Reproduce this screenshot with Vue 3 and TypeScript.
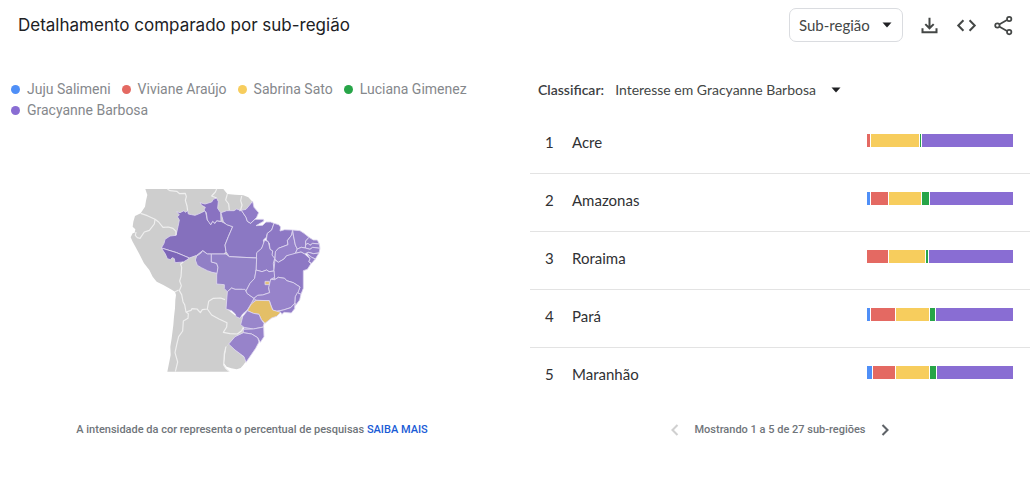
<script setup lang="ts">
import { ref } from 'vue'

interface Term { name: string; color: string }
interface Region { name: string; values: number[] }
interface Shape { id: string; d: string; fill: string }

const terms: Term[] = [
  { name: 'Juju Salimeni', color: '#4f8ff7' },
  { name: 'Viviane Araújo', color: '#e46962' },
  { name: 'Sabrina Sato', color: '#f7cd5d' },
  { name: 'Luciana Gimenez', color: '#27a548' },
  { name: 'Gracyanne Barbosa', color: '#896dd3' },
]

const regions: Region[] = [
  { name: 'Acre', values: [0, 3, 48, 1, 91] },
  { name: 'Amazonas', values: [3, 17, 32, 7, 83] },
  { name: 'Roraima', values: [0, 21, 36, 2, 84] },
  { name: 'Pará', values: [3, 24, 33, 5, 77] },
  { name: 'Maranhão', values: [5, 22, 33, 6, 76] },
]

const level = ref('Sub-região')
const sort = ref('Gracyanne Barbosa')

const segments = (r: Region) =>
  r.values.map((value, i) => ({ value, color: terms[i].color })).filter((s) => s.value > 0)

const land =
  'M76 27H310L322 42L345 44L370 46L385 52L396 64L380 95L340 200L340 330L322 335L318 385L352 412L368 410L370 458L345 470L328 490L318 500L313 520L311 555L318 566L328 575H142L152 525L151 500L155 475L160 435L162 410L165 385L166 360L168 345L165 335L150 326L130 315L110 305L98 290L88 270L72 250L58 222L45 198L38 185L32 172L38 160L44 158L46 148L38 140L40 125L45 108L62 100L75 80L78 62L82 45Z'
const uruguay =
  'M318 500L328 490L345 510L365 526L377 536L377 545L370 555L362 564L350 568L334 565L320 560L312 550L315 525Z'
const interior =
  'M300 240H540V320L520 360L440 390L425 425L428 465L405 464L372 456L372 445L366 434L370 408L385 388L340 330Z'

const states: Shape[] = [
  { id: 'AM', fill: '#8570bd', d: 'M170 95L180 98L192 92L196 97L203 92L205 102L215 104L225 106L240 100L256 92L262 120L268 126L272 134L278 124L285 130L290 122L305 125L322 134L338 140L325 170L315 195L318 215L312 222H262L248 212L230 226L208 234L170 218L124 204L132 190L135 178L150 168L168 166L174 140L178 120L172 110L178 105Z' },
  { id: 'RR', fill: '#8972c1', d: 'M240 68L255 72L275 66L280 58L290 54L295 65L293 85L302 98L303 124L290 122L285 130L278 124L272 134L262 120L259 98L252 90L256 82L245 76Z' },
  { id: 'AC', fill: '#7d66b8', d: 'M124 204L170 218L208 234L200 240L190 246L165 248L163 236L157 233L151 239L142 236L136 222Z' },
  { id: 'RO', fill: '#917fc6', d: 'M230 228L242 220L248 212L262 222H274V246L290 250L294 262L292 280L276 277L262 272L244 263L232 256L226 240Z' },
  { id: 'PA', fill: '#8b78c3', d: 'M306 110L303 98L320 92L342 92L350 87L365 92L378 112L382 124L392 130L405 118L430 118L432 123L415 133L408 137L428 136L438 126L452 126L462 130L455 150L442 160L439 172L430 180L432 190L425 205L411 218L410 234L328 230L318 215L315 195L325 170L338 140L320 134L310 125Z' },
  { id: 'AP', fill: '#907bc7', d: 'M358 92L378 88L398 64L402 82L416 98L410 112L392 130L382 124L378 112L365 92Z' },
  { id: 'MA', fill: '#8d78c4', d: 'M462 130L476 134L482 141L480 153L494 149L518 150L515 165L502 182L504 194L475 205L467 215L464 238L455 225L458 213L450 208L448 190L439 180L442 160L455 150Z' },
  { id: 'TO', fill: '#907dc6', d: 'M434 180L445 185L450 208L458 213L456 225L464 235L460 250L462 273L447 275L440 270L426 275L408 270L410 218L425 205Z' },
  { id: 'PI', fill: '#9682ca', d: 'M518 150L520 165L526 195L532 207L526 220L515 225L500 227L492 237L475 247L465 238L466 215L475 205L504 194L502 182L515 165Z' },
  { id: 'CE', fill: '#9480c9', d: 'M518 150L540 152L552 160L567 172L557 183L556 204L544 202L532 207L526 195L520 165Z' },
  { id: 'RN', fill: '#937fc7', d: 'M567 172L580 180L592 180L598 192L578 190L570 196L564 190L557 194L557 183Z' },
  { id: 'PB', fill: '#937fc7', d: 'M557 194L564 190L570 196L578 190L598 192L600 205L578 202L570 208L556 204Z' },
  { id: 'PE', fill: '#937fc7', d: 'M532 207L544 202L556 204L570 208L578 202L600 205L597 219L580 221L566 217L554 222L543 216L526 220Z' },
  { id: 'AL', fill: '#917cc6', d: 'M560 220L566 217L580 221L597 219L586 237L575 232Z' },
  { id: 'SE', fill: '#937fc7', d: 'M560 220L575 232L586 237L575 250L566 245L570 236Z' },
  { id: 'BA', fill: '#8d78c4', d: 'M465 240L475 247L492 237L500 227L526 220L543 216L554 222L570 236L566 245L573 251L562 268L550 272V325L543 343L532 338L540 321L520 308L500 302L494 295L475 292L464 299L461 280Z' },
  { id: 'MT', fill: '#9281c7', d: 'M274 222H318L328 230L410 234L408 270L404 295L390 310L378 333L365 328L345 328L335 324L322 335L313 326V314L290 312V285L294 262L290 250L274 246Z' },
  { id: 'MS', fill: '#937fc8', d: 'M322 335L335 324L345 328L375 328L382 341L402 355L394 370L382 390L368 402L360 415L348 410L346 402L335 392L318 387Z' },
  { id: 'GO', fill: '#937fc8', d: 'M408 270L426 275L440 270L447 275L462 273L464 292L452 298L450 315L446 323L449 338L428 345L413 346L402 355L382 341L378 333L390 310L404 295Z' },
  { id: 'MG', fill: '#9783ca', d: 'M452 298L464 299L475 292L494 295L500 302L520 308L540 321L534 338L526 350L525 369L512 383L490 390L470 394L458 390L448 362L408 361L402 355L413 346L428 345L449 338L446 323Z' },
  { id: 'ES', fill: '#907bc6', d: 'M532 338L543 343L539 360L526 377L525 369L526 350Z' },
  { id: 'RJ', fill: '#937ec8', d: 'M482 397L470 394L490 390L512 383L525 369L524 386L514 399L492 397L486 403Z' },
  { id: 'SP', fill: '#e4bf67', d: 'M382 392L394 372L408 361L448 362L452 375L458 390L482 397L470 409L455 414L435 430L424 419L417 403L400 400Z' },
  { id: 'DF', fill: '#e4c27a', d: 'M435 304H448V314H435Z' },
  { id: 'PR', fill: '#9986cb', d: 'M368 410L382 392L400 400L417 403L424 419L432 430L430 441L400 447L372 442L362 434Z' },
  { id: 'SC', fill: '#9783ca', d: 'M370 448L400 447L431 441L432 470L421 487L413 473L395 462L370 458Z' },
  { id: 'RS', fill: '#9783ca', d: 'M326 492L345 470L370 458L395 462L413 473L417 486L407 505L378 547L372 530L345 510Z' },
]

const borders = [
  'M142 27L150 32L170 34L179 41L196 40L199 50L196 61L201 78L203 92',
  'M62 100L82 107L105 118L103 132L88 151L73 156L60 175L52 173L46 166L48 156',
  'M105 118L116 126L129 142L145 141L159 145L168 154L168 166',
  'M290 54L275 48L286 36L290 27',
  'M322 42L317 60L326 72L328 90M365 48L362 62L366 75L362 90',
  'M190 246L182 252L185 262L183 290L179 303L184 317L178 332L185 344L189 365L194 374L198 396L205 401L204 415L190 423L188 453L176 470L171 490L165 518L173 546L166 575',
  'M165 335L176 330M198 396L213 391L216 386L231 387L241 398L247 389L262 387L266 364L280 355L302 354L315 359',
  'M262 387L275 405L297 417L321 428L320 441L310 457L330 461L352 462L365 452L370 442',
  'M318 500L313 520L311 555L318 566L328 575',
]
</script>

<template>
  <main class="card">
    <header class="top">
      <h1>Detalhamento comparado por sub-região</h1>
      <div class="actions">
        <label class="level">
          <select v-model="level" aria-label="Nível">
            <option>Sub-região</option>
            <option>Cidade</option>
          </select>
          <svg class="caret" viewBox="0 0 10 6" aria-hidden="true"><path d="M.5 .5H9.5L5 5.5Z" /></svg>
        </label>
        <button type="button" aria-label="Baixar">
          <svg viewBox="0 0 24 24" aria-hidden="true"><path d="M12 3V15M7.2 10.4L12 15.2L16.8 10.4M4 15V19.8H20V15" /></svg>
        </button>
        <button type="button" aria-label="Incorporar">
          <svg viewBox="0 0 24 24" aria-hidden="true"><path d="M8.5 6L2.6 12L8.5 18M15.5 6L21.4 12L15.5 18" /></svg>
        </button>
        <button type="button" aria-label="Compartilhar">
          <svg class="share" viewBox="0 0 24 24" aria-hidden="true">
            <path d="M7.500 10.700L16 5.800M7.500 13.300L16 18.200" />
            <circle cx="5" cy="12" r="2.500" /><circle cx="18.500" cy="4.500" r="2.500" /><circle cx="18.500" cy="19.500" r="2.500" />
          </svg>
        </button>
      </div>
    </header>

    <div class="body">
      <section class="left">
        <ul class="legend">
          <li v-for="t in terms" :key="t.name"><i :style="{ background: t.color }"></i>{{ t.name }}</li>
        </ul>
        <svg class="map" viewBox="0 0 630 600" role="img" aria-label="Mapa do Brasil por sub-região">
          <path class="land" :d="land" />
          <path class="land" :d="uruguay" />
          <path class="interior" :d="interior" />
          <path v-for="s in states" :key="s.id" class="state" :d="s.d" :fill="s.fill" />
          <path v-for="b in borders" :key="b" class="border" :d="b" />
        </svg>
        <p class="note">A intensidade da cor representa o percentual de pesquisas <a href="#">SAIBA MAIS</a></p>
      </section>

      <section class="right">
        <div class="sort">
          <label for="sort">Classificar:</label>
          <span class="sortbox">
            <select id="sort" v-model="sort">
              <option v-for="t in terms" :key="t.name" :value="t.name">Interesse em {{ t.name }}</option>
            </select>
            <svg class="caret" viewBox="0 0 10 6" aria-hidden="true"><path d="M.5 .5H9.5L5 5.5Z" /></svg>
          </span>
        </div>
        <table>
          <tbody>
            <tr v-for="(r, i) in regions" :key="r.name">
              <td class="rank">{{ i + 1 }}</td>
              <td>{{ r.name }}</td>
              <td class="chart">
                <div class="bar">
                  <span v-for="s in segments(r)" :key="s.color" :style="{ flexGrow: s.value, background: s.color }"></span>
                </div>
              </td>
            </tr>
          </tbody>
        </table>
        <nav class="pager">
          <button type="button" disabled aria-label="Anterior"><svg viewBox="0 0 24 24" aria-hidden="true"><path d="M15 6L9 12L15 18" /></svg></button>
          <span>Mostrando 1 a 5 de 27 sub-regiões</span>
          <button type="button" aria-label="Próxima"><svg viewBox="0 0 24 24" aria-hidden="true"><path d="M9 6L15 12L9 18" /></svg></button>
        </nav>
      </section>
    </div>
  </main>
</template>

<style>
body { margin: 0; background: #fff; }
</style>

<style scoped>
.card { font-family: Lato, "Liberation Sans", sans-serif; color: #3c4043; }
.top { display: flex; align-items: center; justify-content: space-between; height: 50px; padding: 0 20px 0 18px; }
h1 { margin: 0; font-family: Inter, sans-serif; font-size: 17px; font-weight: 400; color: #202124; }
.actions { display: flex; align-items: center; gap: 16px; }
.level { position: relative; display: flex; align-items: center; }
select { appearance: none; border: 0; background: transparent; color: #444746; font-family: inherit; font-size: 15px; padding: 0; margin: 0; }
.level select { width: 114px; height: 34px; padding: 0 24px 0 9px; border: 1px solid #dadce0; border-radius: 7px; }
.caret { width: 10px; height: 6px; fill: #202124; pointer-events: none; }
.level .caret { position: absolute; right: 11px; }
button { display: flex; padding: 0; border: 0; background: none; }
.actions button svg { width: 21px; height: 21px; fill: none; stroke: #444746; stroke-width: 2.3; }
.actions .share { stroke-width: 2; }
.body { display: grid; grid-template-columns: 530px minmax(0, 1fr); padding-right: 4px; }
.legend { display: flex; flex-wrap: wrap; list-style: none; margin: 0; padding: 29px 40px 0 11px; column-gap: 11px; color: #85888c; font: 14px/21px Roboto, sans-serif; }
.legend li { display: flex; align-items: center; }
.legend i { width: 9px; height: 9px; margin-right: 7px; border-radius: 50%; }
.map { display: block; width: 210px; height: 200px; margin: 59px 0 0 120px; }
.land { fill: #cecece; }
.interior { fill: #b5a7db; }
.state { stroke: #ded7ef; stroke-width: 2.5; stroke-linejoin: round; }
.border { fill: none; stroke: #efefef; stroke-width: 3.5; stroke-linejoin: round; }
.note { margin: 40px 0 0; padding-right: 26px; text-align: center; font: 500 11px/20px Roboto, sans-serif; color: #70757a; }
a { color: #1a5bd6; text-decoration: none; }
.sort { display: flex; align-items: center; gap: 11px; height: 21px; padding: 29px 0 0 8px; font-size: 14px; }
.sort label { font-weight: 600; }
.sort select { font-size: 14px; padding-right: 25px; }
.sortbox { position: relative; display: flex; align-items: center; }
.sortbox .caret { position: absolute; right: 0; }
table { width: 100%; margin-top: 16px; border-collapse: collapse; font-size: 15px; color: #303134; }
td { height: 51px; padding: 0 0 6px; border-bottom: 1px solid #e3e3e3; }
tr:last-child td { border-bottom: 0; }
.rank { width: 27px; padding-left: 15px; }
.chart { width: 146px; padding: 0 17px 8px 0; height: 49px; }
.bar { display: flex; gap: 1px; height: 13px; }
.bar span { flex: 1 1 0; }
.pager { display: flex; align-items: center; justify-content: center; gap: 9px; margin-top: 15px; font: 500 11px/20px Roboto, sans-serif; color: #70757a; }
.pager svg { width: 20px; height: 20px; fill: none; stroke: #5f6368; stroke-width: 2.5; }
.pager button:disabled svg { stroke: #d0d0d0; }
</style>
